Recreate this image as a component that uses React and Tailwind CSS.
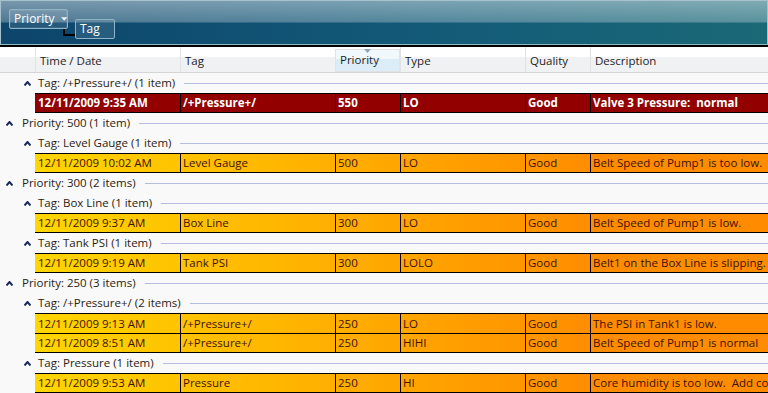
import React from "react";

// Grouped alarm grid: group-by panel on top, column header, grouped rows
const COLS = [
  { label: "Time / Date", w: "w-[145px]" },
  { label: "Tag", w: "w-[155px]" },
  { label: "Priority", w: "w-[65px]" },
  { label: "Type", w: "w-[125px]" },
  { label: "Quality", w: "w-[65px]" },
  { label: "Description", w: "w-[260px]" },
];

const ITEMS = [
  { k: "tag", label: "Tag: /+Pressure+/ (1 item)" },
  { k: "row", alarm: true, cells: ["12/11/2009 9:35 AM", "/+Pressure+/", "550", "LO", "Good", "Valve 3 Pressure:  normal"], last: true },
  { k: "pri", label: "Priority: 500 (1 item)" },
  { k: "tag", label: "Tag: Level Gauge (1 item)" },
  { k: "row", cells: ["12/11/2009 10:02 AM", "Level Gauge", "500", "LO", "Good", "Belt Speed of Pump1 is too low."], last: true },
  { k: "pri", label: "Priority: 300 (2 items)" },
  { k: "tag", label: "Tag: Box Line (1 item)" },
  { k: "row", cells: ["12/11/2009 9:37 AM", "Box Line", "300", "LO", "Good", "Belt Speed of Pump1 is low."], last: true },
  { k: "tag", label: "Tag: Tank PSI (1 item)" },
  { k: "row", cells: ["12/11/2009 9:19 AM", "Tank PSI", "300", "LOLO", "Good", "Belt1 on the Box Line is slipping."], last: true },
  { k: "pri", label: "Priority: 250 (3 items)" },
  { k: "tag", label: "Tag: /+Pressure+/ (2 items)" },
  { k: "row", cells: ["12/11/2009 9:13 AM", "/+Pressure+/", "250", "LO", "Good", "The PSI in Tank1 is low."] },
  { k: "row", cells: ["12/11/2009 8:51 AM", "/+Pressure+/", "250", "HIHI", "Good", "Belt Speed of Pump1 is normal"], last: true },
  { k: "tag", label: "Tag: Pressure (1 item)" },
  { k: "row", cells: ["12/11/2009 9:53 AM", "Pressure", "250", "HI", "Good", "Core humidity is too low.  Add coolant to the line."], last: true },
];

function Caret() {
  return (
    <svg width="7" height="5" viewBox="0 0 7 5" className="shrink-0">
      <path d="M0.5 4.5 L3.5 1 L6.5 4.5" fill="none" stroke="#1b2a5e" strokeWidth="2" />
    </svg>
  );
}

function GroupHeader({ label, level }) {
  return (
    <div className={["h-[20px] shrink-0 flex items-center", level === "pri" ? "pl-[6px]" : "pl-[24px]"].join(" ")}>
      <Caret />
      <span className={["text-[#2a1c12] whitespace-nowrap", level === "pri" ? "ml-[9px]" : "ml-[7px]"].join(" ")}>{label}</span>
      <div className="flex-1 h-px bg-[#b3bde0] ml-[9px]" />
    </div>
  );
}

function DataRow({ cells, alarm, last }) {
  return (
    <div
      className={[
        "ml-[35px] h-[20px] shrink-0 flex border-t border-black whitespace-pre",
        last ? "border-b" : "",
        alarm
          ? "bg-[#930000] text-white font-bold"
          : "bg-[linear-gradient(to_right,#ffd600,#ff8c00_77%)] text-[#3d1200]",
      ].join(" ")}
    >
      {cells.map((c, i) => (
        <div
          key={i}
          className={[
            "shrink-0 flex items-center overflow-hidden",
            i === 0 ? "w-[145px] pl-[3px]" : "border-l border-black pl-[2px]",
            i === 1 ? "w-[155px]" : "",
            i === 2 ? "w-[65px]" : "",
            i === 3 ? "w-[125px]" : "",
            i === 4 ? "w-[65px]" : "",
            i === 5 ? "w-[260px]" : "",
          ].join(" ")}
        >
          {c}
        </div>
      ))}
    </div>
  );
}

export default function App() {
  return (
    <div className="w-[768px] h-[393px] overflow-hidden bg-[#f9f9f9] font-['Open_Sans',sans-serif] text-[11.5px]">
      {/* group-by panel */}
      <div className="h-[45px] border border-[#a7c2cf] border-b-[#8fb8c0] bg-[linear-gradient(to_bottom,rgba(255,255,255,0.44),rgba(255,255,255,0.28)_48%,rgba(255,255,255,0)_52%),linear-gradient(to_right,#0d456b,#135a78_55%,#1b6977)] flex items-start pl-2 pt-2">
        <div className="w-[59px] h-[20px] flex items-center gap-[6px] pl-[4px] rounded-[2px] border border-[#8fb3c6] bg-white/10 shadow-[inset_0_0_0_1px_rgba(255,255,255,0.08)] text-white text-[12px]">
          <span>Priority</span>
          <svg width="7" height="4" viewBox="0 0 7 4">
            <path d="M0 0 H7 L3.5 4 Z" fill="#f2f6f8" />
          </svg>
        </div>
        <div className="ml-[-5px] mt-[20px] w-[12px] h-[7px] border-l-2 border-b-2 border-black" />
        <div className="mt-[10px] w-[40px] h-[20px] flex items-center pl-[4px] rounded-[2px] border border-[#8fb3c6] bg-white/10 text-white text-[12px]">
          Tag
        </div>
      </div>
      <div className="h-[2px] bg-black" />

      {/* column header */}
      <div className="h-[26px] flex bg-[linear-gradient(to_bottom,#ffffff,#ffffff_40%,#f0f1f3_42%,#f0f1f3)] border-b border-[#d5d5d5] text-[#1e1e1e]">
        <div className="w-[35px] shrink-0" />
        {COLS.map((c) => (
          <div
            key={c.label}
            className={[
              "relative shrink-0 flex items-end pb-[3px] border-l border-[#e1e2e4]",
              c.w,
              c.label === "Priority"
                ? "pl-[4px] border border-[#a6d6f0] bg-[linear-gradient(to_bottom,#f2f9fd,#f2f9fd_40%,#dcedf7_42%,#dcedf7)] mt-[2px]"
                : "pl-[4px]",
            ].join(" ")}
          >
            {c.label === "Priority" && (
              <svg width="7" height="4" viewBox="0 0 7 4" className="absolute top-[-1px] left-[28px]">
                <path d="M0 0 H7 L3.5 4 Z" fill="#8fa3b2" />
              </svg>
            )}
            {c.label}
          </div>
        ))}
      </div>

      {/* grouped rows */}
      <div className="flex flex-col">
        {ITEMS.map((it, i) =>
          it.k === "row" ? (
            <DataRow key={i} cells={it.cells} alarm={it.alarm} last={it.last} />
          ) : (
            <GroupHeader key={i} label={it.label} level={it.k} />
          )
        )}
      </div>
    </div>
  );
}
